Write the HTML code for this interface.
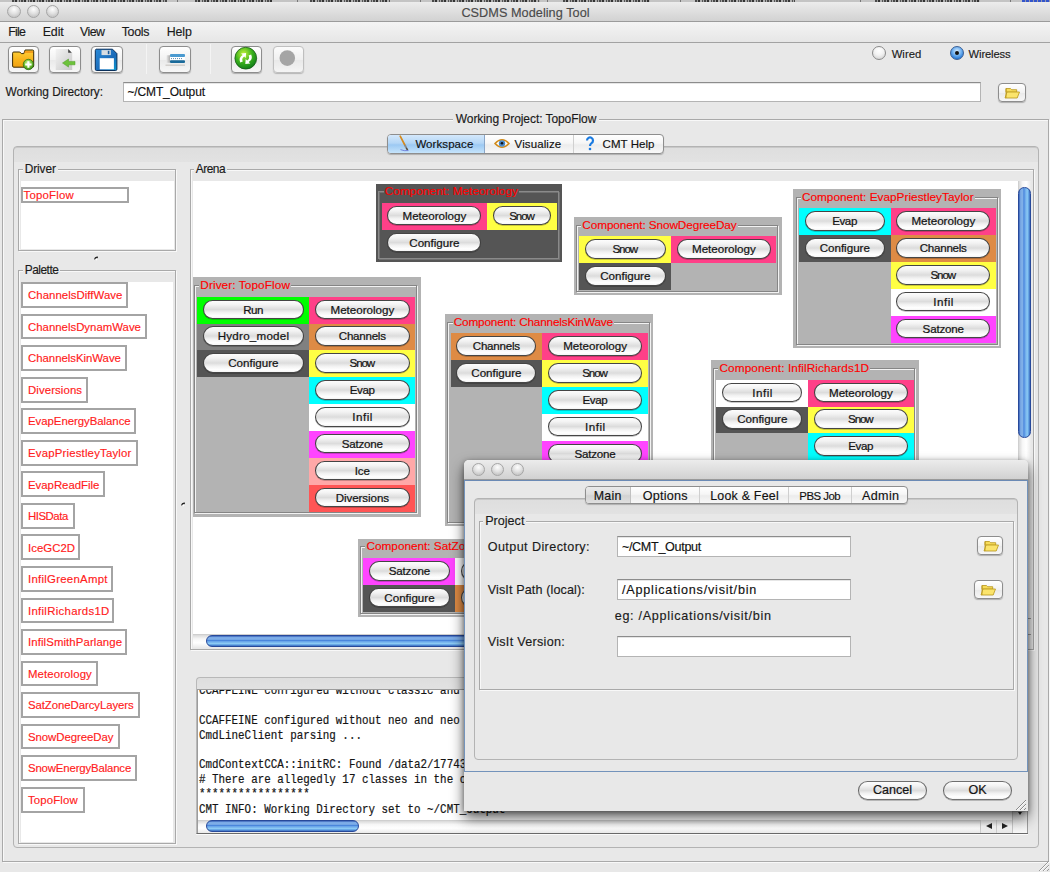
<!DOCTYPE html><html><head><meta charset="utf-8"><title>CSDMS Modeling Tool</title><style>
*{margin:0;padding:0;box-sizing:border-box}
html,body{width:1050px;height:872px;overflow:hidden;background:#e8e8e8;font-family:"Liberation Sans",sans-serif}
.a{position:absolute}
.t{white-space:pre;line-height:1;-webkit-text-stroke:.15px currentColor}
.btn{position:absolute;border-radius:10px;border:1px solid rgba(0,0,0,.72);box-shadow:0 .8px .6px rgba(0,0,0,.28);
 background:linear-gradient(#fdfdfd 0%,#f3f3f3 22%,#dcdcdc 50%,#f2f2f2 68%,#ffffff 88%,#f4f4f4 100%);
 font-size:11.6px;text-align:center;color:#141414;white-space:pre;overflow:hidden;-webkit-text-stroke:.22px #141414}
.tb{position:absolute;border:1px solid #a9a9a9;box-shadow:inset 1px 1px 0 #f8f8f8, 1px 1px 0 #f8f8f8}
.tbtn{position:absolute;border-radius:4px;border:1px solid #8d8d8d;background:linear-gradient(#ffffff,#f2f2f2 50%,#e9e9e9 51%,#f7f7f7);box-shadow:0 1px 1px rgba(0,0,0,.25)}
.tl{position:absolute;border-radius:50%;border:1px solid #a6a6a6;background:radial-gradient(circle at 50% 30%,#fdfdfd 0%,#e2e2e2 45%,#c9c9c9 75%,#d8d8d8 100%)}
.field{position:absolute;background:#fff;border:1px solid #b4b4b4;border-top-color:#8c8c8c;box-shadow:inset 0 1px 0 #e6e6e6}
</style></head><body>
<div class="a " style="left:0px;top:0px;width:1050px;height:2.2px;background:#c4c4c4"></div>
<div class="a " style="left:12px;top:0px;width:155px;height:1.6px;background:repeating-linear-gradient(90deg,#4a4a4a 0 2px,#9a9a9a 2px 3px,#333 3px 5px,#b0b0b0 5px 7px,#555 7px 8px,#a8a8a8 8px 9px)"></div>
<div class="a " style="left:195px;top:0px;width:77px;height:1.6px;background:repeating-linear-gradient(90deg,#4a4a4a 0 2px,#9a9a9a 2px 3px,#333 3px 5px,#b0b0b0 5px 7px,#555 7px 8px,#a8a8a8 8px 9px)"></div>
<div class="a " style="left:310px;top:0px;width:80px;height:1.6px;background:repeating-linear-gradient(90deg,#4a4a4a 0 2px,#9a9a9a 2px 3px,#333 3px 5px,#b0b0b0 5px 7px,#555 7px 8px,#a8a8a8 8px 9px)"></div>
<div class="a " style="left:432px;top:0px;width:108px;height:1.6px;background:repeating-linear-gradient(90deg,#4a4a4a 0 2px,#9a9a9a 2px 3px,#333 3px 5px,#b0b0b0 5px 7px,#555 7px 8px,#a8a8a8 8px 9px)"></div>
<div class="a " style="left:563px;top:0px;width:87px;height:1.6px;background:repeating-linear-gradient(90deg,#4a4a4a 0 2px,#9a9a9a 2px 3px,#333 3px 5px,#b0b0b0 5px 7px,#555 7px 8px,#a8a8a8 8px 9px)"></div>
<div class="a " style="left:695px;top:0px;width:100px;height:1.6px;background:repeating-linear-gradient(90deg,#4a4a4a 0 2px,#9a9a9a 2px 3px,#333 3px 5px,#b0b0b0 5px 7px,#555 7px 8px,#a8a8a8 8px 9px)"></div>
<div class="a " style="left:875px;top:0px;width:105px;height:1.6px;background:repeating-linear-gradient(90deg,#4a4a4a 0 2px,#9a9a9a 2px 3px,#333 3px 5px,#b0b0b0 5px 7px,#555 7px 8px,#a8a8a8 8px 9px)"></div>
<div class="a " style="left:177px;top:0px;width:1px;height:2.2px;background:#777"></div>
<div class="a " style="left:297px;top:0px;width:1px;height:2.2px;background:#777"></div>
<div class="a " style="left:420px;top:0px;width:1px;height:2.2px;background:#777"></div>
<div class="a " style="left:547px;top:0px;width:1px;height:2.2px;background:#777"></div>
<div class="a " style="left:680px;top:0px;width:1px;height:2.2px;background:#777"></div>
<div class="a " style="left:860px;top:0px;width:1px;height:2.2px;background:#777"></div>
<div class="a " style="left:1010px;top:0px;width:1px;height:2.2px;background:#777"></div>
<div class="a " style="left:1022px;top:0px;width:28px;height:1.6px;background:repeating-linear-gradient(90deg,#3355cc 0 3px,#99a 3px 4px)"></div>
<div class="a " style="left:0px;top:2px;width:1050px;height:20px;background:linear-gradient(#ececec,#dcdcdc 60%,#d2d2d2);border-bottom:1px solid #9b9b9b"></div>
<div class="a tl" style="left:7.4px;top:5.0px;width:13.2px;height:13.2px;"></div>
<div class="a tl" style="left:26.6px;top:5.0px;width:13.2px;height:13.2px;"></div>
<div class="a tl" style="left:45.8px;top:5.0px;width:13.2px;height:13.2px;"></div>
<div class="a t" style="left:225.5px;width:600px;text-align:center;top:7px;font-size:12.7px;color:#4a4a4a;letter-spacing:0.044px;">CSDMS Modeling Tool</div>
<div class="a " style="left:0px;top:22px;width:1050px;height:21px;background:linear-gradient(#f4f4f4,#e6e6e6);border-bottom:1px solid #a2a2a2"></div>
<div class="a t " style="left:8.3px;top:26px;font-size:12.4px;color:#1a1a1a;letter-spacing:-0.791px;">File</div>
<div class="a t " style="left:42.7px;top:26px;font-size:12.4px;color:#1a1a1a;letter-spacing:-0.103px;">Edit</div>
<div class="a t " style="left:80px;top:26px;font-size:12.4px;color:#1a1a1a;letter-spacing:-0.561px;">View</div>
<div class="a t " style="left:121.7px;top:26px;font-size:12.4px;color:#1a1a1a;letter-spacing:-0.282px;">Tools</div>
<div class="a t " style="left:166.7px;top:26px;font-size:12.4px;color:#1a1a1a;letter-spacing:-0.097px;">Help</div>
<div class="a tbtn" style="left:7.8px;top:45.8px;width:31.7px;height:27.0px;"><svg width="32" height="27" viewBox="0 0 32 27" style="position:absolute;left:-1px;top:-1px">
<defs><linearGradient id="fg" x1="0" y1="0" x2="0" y2="1"><stop offset="0" stop-color="#ffd23a"/><stop offset=".6" stop-color="#f7b21a"/><stop offset="1" stop-color="#f0a010"/></linearGradient>
<radialGradient id="pg" cx="45%" cy="35%" r="65%"><stop offset="0" stop-color="#d8f5b0"/><stop offset=".5" stop-color="#7cc83a"/><stop offset="1" stop-color="#3a8a18"/></radialGradient></defs>
<path d="M4.6 7.2 q0 -1.2 1.2 -1.2 h6 l1.5 1.6 h2.5 l1.3 -3.6 h7.4 q1.2 0 1.2 1.2 v14.8 q0 1.2 -1.2 1.2 h-18.7 q-1.2 0 -1.2 -1.2 z" fill="url(#fg)" stroke="#3a2a05" stroke-width="1"/>
<path d="M16.5 6 h8.5" stroke="#f08a10" stroke-width="1.4"/>
<circle cx="20.4" cy="18.5" r="5.2" fill="url(#pg)" stroke="#2a6a10" stroke-width=".7"/>
<path d="M20.4 15.3 v6.4 M17.2 18.5 h6.4" stroke="#fff" stroke-width="2.1"/>
</svg></div>
<div class="a tbtn" style="left:49px;top:45.8px;width:32px;height:27.0px;"><svg width="32" height="27" viewBox="0 0 32 27" style="position:absolute;left:-1px;top:-1px">
<defs><linearGradient id="ig" x1="0" y1="0" x2="1" y2="1"><stop offset="0" stop-color="#f4f4f4"/><stop offset="1" stop-color="#c8c8c8"/></linearGradient></defs>
<path d="M6.7 3 h12.5 l4 4 v17 h-16.5 z" fill="url(#ig)"/>
<path d="M19.2 3 l3.6 3.8 h-3.6 z" fill="#444"/>
<path d="M13.5 17 l6 -4 v2.4 h6.5 v3.4 h-6.5 v2.3 z" fill="#6cc23a" stroke="#4a9a20" stroke-width=".5"/>
</svg></div>
<div class="a tbtn" style="left:91px;top:45.8px;width:31.5px;height:27.0px;"><svg width="32" height="27" viewBox="0 0 32 27" style="position:absolute;left:-1px;top:-1px">
<defs><linearGradient id="sg" x1="0" y1="0" x2="1" y2="1"><stop offset="0" stop-color="#2a8ad8"/><stop offset=".6" stop-color="#1a6ab8"/><stop offset="1" stop-color="#0a9ad0"/></linearGradient></defs>
<path d="M5.5 3.2 h16 l4.4 4.4 v15.6 q0 1.3 -1.3 1.3 h-19 q-1.3 0 -1.3 -1.3 v-18.7 q0 -1.3 1.3 -1.3 z" fill="url(#sg)" stroke="#0a2f5a" stroke-width="1"/>
<rect x="10.5" y="4.1" width="9.3" height="5" fill="#d8dde2"/>
<rect x="16.8" y="4.8" width="1.6" height="3.4" fill="#1a5a9a"/>
<rect x="8.7" y="12.2" width="14.2" height="11.1" fill="#fff"/>
</svg></div>
<div class="a " style="left:146.2px;top:44px;width:1px;height:30px;background:#cfcfcf;border-right:1px solid #f4f4f4"></div>
<div class="a tbtn" style="left:159px;top:45.8px;width:32px;height:27.0px;"><svg width="32" height="27" viewBox="0 0 32 27" style="position:absolute;left:-1px;top:-1px">
<defs><linearGradient id="tg" x1="0" y1="0" x2="1" y2="0"><stop offset="0" stop-color="#f0f0f0"/><stop offset="1" stop-color="#a8a8a8"/></linearGradient></defs>
<path d="M7 16.8 l.6 -7.5 h3.6 v7.5 z" fill="url(#tg)"/>
<rect x="11" y="8" width="15" height="3" rx="1" fill="#4a9ad0"/>
<rect x="11" y="11" width="15" height="3.2" fill="#fff"/>
<path d="M12 12.6 h12" stroke="#5a8ab0" stroke-width="1" stroke-dasharray="1 1"/>
<rect x="11" y="14.2" width="15" height="2.9" rx="1" fill="#1a6a9a"/>
<rect x="6.5" y="18.5" width="19.5" height="1.4" fill="#c8c4c0" opacity=".8"/>
</svg></div>
<div class="a " style="left:209.5px;top:44px;width:1px;height:30px;background:#cfcfcf;border-right:1px solid #f4f4f4"></div>
<div class="a tbtn" style="left:231.4px;top:45.8px;width:30.900000000000006px;height:27.0px;"><svg width="31" height="27" viewBox="0 0 31 27" style="position:absolute;left:-1px;top:-1px">
<defs><radialGradient id="gg" cx="40%" cy="30%" r="70%"><stop offset="0" stop-color="#c6f23a"/><stop offset=".55" stop-color="#3cb31c"/><stop offset="1" stop-color="#12801a"/></radialGradient></defs>
<circle cx="14.8" cy="12.2" r="10.9" fill="url(#gg)" stroke="#1c5a18" stroke-width=".8"/>
<g transform="translate(-.8,-1)"><path d="M10 17.5 a6 6 0 0 1 2.5 -7.5 l-1.6 -1.4 l5 -.6 l-.4 5 l-1.4 -1.5 a3.8 3.8 0 0 0 -1.5 5 z" fill="#fff"/>
<path d="M21 9.5 a6 6 0 0 1 -2.5 7.5 l1.6 1.4 l-5 .6 l.4 -5 l1.4 1.5 a3.8 3.8 0 0 0 1.5 -5 z" fill="#fff"/></g>
</svg></div>
<div class="a tbtn" style="left:272.6px;top:45.8px;width:31.599999999999966px;height:27.0px;opacity:.85;border-color:#b9b9b9"><svg width="32" height="27" viewBox="0 0 32 27" style="position:absolute;left:-1px;top:-1px">
<circle cx="14.3" cy="12.1" r="7.8" fill="#9a9a9a"/>
</svg></div>
<div class="a " style="left:872.4px;top:46.3px;width:14px;height:14px;border-radius:50%;border:1px solid #8a8a8a;background:radial-gradient(circle at 50% 30%,#ffffff 0%,#f2f2f2 45%,#d8d8d8 80%,#eeeeee 100%)"></div>
<div class="a t " style="left:891.7px;top:49px;font-size:11.3px;color:#1a1a1a;letter-spacing:0.021px;">Wired</div>
<div class="a " style="left:949.5px;top:46.3px;width:14px;height:14px;border-radius:50%;border:1px solid #3a5f95;background:radial-gradient(circle at 50% 35%,#d6ecff 0%,#6fb0f0 45%,#2b7bd6 75%,#9ad0ff 100%)"><div class="a" style="left:4px;top:4px;width:4px;height:4px;border-radius:50%;background:#111"></div></div>
<div class="a t " style="left:968.6px;top:49px;font-size:11.2px;color:#1a1a1a;letter-spacing:-0.128px;">Wireless</div>
<div class="a t " style="left:5.6px;top:87px;font-size:11.9px;color:#1a1a1a;letter-spacing:-0.004px;">Working Directory:</div>
<div class="a field" style="left:123.3px;top:82.4px;width:857.7px;height:20.1px;"></div>
<div class="a t " style="left:127.4px;top:86px;font-size:12px;color:#111;letter-spacing:-0.127px;">~/CMT_Output</div>
<div class="a tbtn" style="left:997.5px;top:82.9px;width:28.09999999999991px;height:19.5px;"><svg width="28" height="20" viewBox="0 0 28 20" style="position:absolute;left:-1px;top:-1px">
<path d="M8 5.5 h4.5 l1.2 1.2 h5 v2.5 h-10.7 z" fill="#f7dc5a" stroke="#b8961a" stroke-width=".8"/>
<path d="M7 15 l2 -6 h12.5 l-2.3 6 z" fill="#fbe46c" stroke="#b8961a" stroke-width=".8"/>
<path d="M8 5.5 v9.5" stroke="#b8961a" stroke-width=".8"/>
</svg></div>
<div class="a tb" style="left:2.3px;top:118.9px;width:1046.9px;height:743.3000000000001px;"></div>
<div class="a " style="left:453px;top:114px;width:146px;height:12px;background:#e8e8e8"></div>
<div class="a t" style="left:226px;width:600px;text-align:center;top:113px;font-size:12px;color:#1a1a1a;letter-spacing:-0.072px;">Working Project: TopoFlow</div>
<div class="a " style="left:13.2px;top:145.7px;width:1025.3999999999999px;height:702.5px;border:1px solid #b3b3b3;border-radius:4px;background:linear-gradient(#dedede,#e2e2e2 15px,#e8e8e8 15px);box-shadow:inset 0 1px 0 #c8c8c8"></div>
<div class="a " style="left:387.1px;top:134.3px;width:276.69999999999993px;height:19.5px;border:1px solid #8e8e8e;border-radius:4px;background:linear-gradient(#ffffff,#f6f6f6 45%,#ececec 55%,#f8f8f8);box-shadow:0 1px 1px rgba(0,0,0,.22);overflow:hidden"><div class="a" style="left:0;top:0;width:97px;height:100%;background:linear-gradient(#d4e8fb,#b4d6f6 45%,#9cc9f3 55%,#c6e4fb);border-right:1px solid #8aa6c8"></div><div class="a" style="left:184.5px;top:0;width:1px;height:100%;background:#d0d0d0"></div></div>
<svg class="a" style="left:397px;top:135px" width="14" height="17" viewBox="0 0 14 17">
<path d="M3.2 1.2 L7.8 10" stroke="#d48a20" stroke-width="1.7" stroke-linecap="round"/>
<path d="M7.8 10 L9.2 12.6" stroke="#8a8a8a" stroke-width="2"/>
<path d="M9.2 12.6 L10.6 15.2" stroke="#5a4a3a" stroke-width="1.6"/>
<path d="M3.5 14.6 Q7 16.2 11.5 15.6" stroke="#6a7ad8" stroke-width=".9" fill="none"/>
</svg>
<div class="a t " style="left:415.4px;top:139px;font-size:11.5px;color:#111;letter-spacing:0.073px;">Workspace</div>
<svg class="a" style="left:494px;top:137px" width="16" height="13" viewBox="0 0 16 13">
<path d="M1 6.5 Q8 -1 15 6.5 Q8 14 1 6.5 z" fill="#fff" stroke="#d08a1a" stroke-width="1.6"/>
<circle cx="8" cy="6.5" r="3.2" fill="#4a8ac8"/><circle cx="8" cy="6.3" r="1.3" fill="#111"/>
</svg>
<div class="a t " style="left:514.6px;top:139px;font-size:11.5px;color:#111;letter-spacing:0.098px;">Visualize</div>
<svg class="a" style="left:585px;top:136px" width="10" height="16" viewBox="0 0 10 16">
<path d="M2 4.5 a3 3 0 1 1 4.5 2.6 q-1.5 1 -1.5 3" stroke="#1a7ae0" stroke-width="2.2" fill="none"/>
<circle cx="5" cy="13" r="1.3" fill="#1a7ae0"/>
</svg>
<div class="a t " style="left:602.6px;top:139px;font-size:11.5px;color:#111;letter-spacing:0.049px;">CMT Help</div>
<div class="a tb" style="left:17.7px;top:169.3px;width:157.9px;height:81.69999999999999px;"></div>
<div class="a t" style="left:22.7px;top:164px;font-size:11.9px;color:#1a1a1a;background:#e8e8e8;padding:0 2px;letter-spacing:-0.109px;">Driver</div>
<div class="a " style="left:20.6px;top:181px;width:153px;height:67.5px;background:#fff"></div>
<div class="a " style="left:21.3px;top:186.8px;width:107.3px;height:16.5px;border:2px solid #a4a4a4;background:#fff"></div>
<div class="a t " style="left:23.5px;top:190px;font-size:11.4px;color:#ff2020;letter-spacing:0.211px;">TopoFlow</div>
<svg class="a" style="left:93.4px;top:254.8px" width="6" height="6" viewBox="0 0 6 6"><path d="M1 4.2 Q1.6 1.2 4.8 1.6 Q5.2 2.8 4.6 3.2 Q3 2.6 1.8 4.6 z" fill="#1e1e1e"/><circle cx="3.6" cy="4.6" r=".8" fill="#fff"/></svg>
<svg class="a" style="left:179.8px;top:501.3px" width="6" height="6" viewBox="0 0 6 6"><path d="M1 4.2 Q1.6 1.2 4.8 1.6 Q5.2 2.8 4.6 3.2 Q3 2.6 1.8 4.6 z" fill="#1e1e1e"/><circle cx="3.6" cy="4.6" r=".8" fill="#fff"/></svg>
<div class="a tb" style="left:17.7px;top:270.4px;width:157.9px;height:573.2px;"></div>
<div class="a t" style="left:22.7px;top:265px;font-size:11.9px;color:#1a1a1a;background:#e8e8e8;padding:0 2px;letter-spacing:-0.468px;">Palette</div>
<div class="a " style="left:20.6px;top:281.6px;width:152.8px;height:560.8px;background:#fff"></div>
<div class="a " style="left:21.3px;top:282.1px;width:106.89999999999999px;height:25.8px;border:2px solid #a4a4a4;background:#fff"></div>
<div class="a t " style="left:28px;top:290px;font-size:11.4px;color:#ff2020;letter-spacing:0.042px;">ChannelsDiffWave</div>
<div class="a " style="left:21.3px;top:313.64000000000004px;width:125.50000000000001px;height:25.8px;border:2px solid #a4a4a4;background:#fff"></div>
<div class="a t " style="left:28px;top:322px;font-size:11.4px;color:#ff2020;letter-spacing:0.002px;">ChannelsDynamWave</div>
<div class="a " style="left:21.3px;top:345.18px;width:105.5px;height:25.8px;border:2px solid #a4a4a4;background:#fff"></div>
<div class="a t " style="left:28px;top:353px;font-size:11.4px;color:#ff2020;letter-spacing:-0.025px;">ChannelsKinWave</div>
<div class="a " style="left:21.3px;top:376.72px;width:67.2px;height:25.8px;border:2px solid #a4a4a4;background:#fff"></div>
<div class="a t " style="left:28px;top:385px;font-size:11.4px;color:#ff2020;letter-spacing:0.092px;">Diversions</div>
<div class="a " style="left:21.3px;top:408.26px;width:115.2px;height:25.8px;border:2px solid #a4a4a4;background:#fff"></div>
<div class="a t " style="left:28px;top:416px;font-size:11.4px;color:#ff2020;letter-spacing:-0.036px;">EvapEnergyBalance</div>
<div class="a " style="left:21.3px;top:439.8px;width:116.39999999999999px;height:25.8px;border:2px solid #a4a4a4;background:#fff"></div>
<div class="a t " style="left:28px;top:448px;font-size:11.4px;color:#ff2020;letter-spacing:0.182px;">EvapPriestleyTaylor</div>
<div class="a " style="left:21.3px;top:471.34000000000003px;width:83.9px;height:25.8px;border:2px solid #a4a4a4;background:#fff"></div>
<div class="a t " style="left:28px;top:480px;font-size:11.4px;color:#ff2020;letter-spacing:-0.019px;">EvapReadFile</div>
<div class="a " style="left:21.3px;top:502.88px;width:53.8px;height:25.8px;border:2px solid #a4a4a4;background:#fff"></div>
<div class="a t " style="left:28px;top:511px;font-size:11.4px;color:#ff2020;letter-spacing:-0.469px;">HISData</div>
<div class="a " style="left:21.3px;top:534.4200000000001px;width:58.7px;height:25.8px;border:2px solid #a4a4a4;background:#fff"></div>
<div class="a t " style="left:28px;top:543px;font-size:11.4px;color:#ff2020;letter-spacing:0.031px;">IceGC2D</div>
<div class="a " style="left:21.3px;top:565.96px;width:92.2px;height:25.8px;border:2px solid #a4a4a4;background:#fff"></div>
<div class="a t " style="left:28px;top:574px;font-size:11.4px;color:#ff2020;letter-spacing:0.269px;">InfilGreenAmpt</div>
<div class="a " style="left:21.3px;top:597.5px;width:93.0px;height:25.8px;border:2px solid #a4a4a4;background:#fff"></div>
<div class="a t " style="left:28px;top:606px;font-size:11.4px;color:#ff2020;letter-spacing:0.292px;">InfilRichards1D</div>
<div class="a " style="left:21.3px;top:629.04px;width:105.60000000000001px;height:25.8px;border:2px solid #a4a4a4;background:#fff"></div>
<div class="a t " style="left:28px;top:637px;font-size:11.4px;color:#ff2020;letter-spacing:0.094px;">InfilSmithParlange</div>
<div class="a " style="left:21.3px;top:660.58px;width:77.0px;height:25.8px;border:2px solid #a4a4a4;background:#fff"></div>
<div class="a t " style="left:28px;top:669px;font-size:11.4px;color:#ff2020;letter-spacing:0.111px;">Meteorology</div>
<div class="a " style="left:21.3px;top:692.12px;width:118.89999999999999px;height:25.8px;border:2px solid #a4a4a4;background:#fff"></div>
<div class="a t " style="left:28px;top:700px;font-size:11.4px;color:#ff2020;letter-spacing:-0.076px;">SatZoneDarcyLayers</div>
<div class="a " style="left:21.3px;top:723.6600000000001px;width:98.7px;height:25.8px;border:2px solid #a4a4a4;background:#fff"></div>
<div class="a t " style="left:28px;top:732px;font-size:11.4px;color:#ff2020;letter-spacing:-0.051px;">SnowDegreeDay</div>
<div class="a " style="left:21.3px;top:755.2px;width:115.8px;height:25.8px;border:2px solid #a4a4a4;background:#fff"></div>
<div class="a t " style="left:28px;top:763px;font-size:11.4px;color:#ff2020;letter-spacing:-0.157px;">SnowEnergyBalance</div>
<div class="a " style="left:21.3px;top:786.74px;width:63.3px;height:25.8px;border:2px solid #a4a4a4;background:#fff"></div>
<div class="a t " style="left:28px;top:795px;font-size:11.4px;color:#ff2020;letter-spacing:0.125px;">TopoFlow</div>
<div class="a tb" style="left:189.6px;top:169.3px;width:843.9999999999999px;height:480.99999999999994px;"></div>
<div class="a t" style="left:193.7px;top:164px;font-size:11.9px;color:#1a1a1a;background:#e8e8e8;padding:0 2px;letter-spacing:-0.454px;">Arena</div>
<div class="a" style="left:192.8px;top:181px;width:825.2px;height:453.29999999999995px;background:#fff;overflow:hidden">
<div class="a" style="left:-1.0px;top:96.3px;width:228.8px;height:239.3px;background:#b3b3b3"><div class="a" style="left:2.2px;top:7.7px;width:223.10000000000002px;height:228.5px;border:1px solid #858585;box-shadow:inset 1px 1px 0 #f2f2f2,1px 1px 0 #f2f2f2"></div><div class="a t" style="left:7.5px;top:2.70px;font-size:11.8px;color:#ff0000;background:#b3b3b3;padding:0 1px;letter-spacing:0.088px;">Driver: TopoFlow</div><div class="a" style="left:5.5px;top:19.4px;width:112.2px;height:26.900000000000002px;background:#00ff00"></div><div class="btn" style="left:11.2px;top:22.299999999999997px;width:100.8px;height:19.6px;line-height:17.4px;letter-spacing:-0.610px;text-indent:-0.610px">Run</div><div class="a" style="left:5.5px;top:46.25px;width:112.2px;height:26.900000000000002px;background:#808080"></div><div class="btn" style="left:11.2px;top:49.15px;width:100.8px;height:19.6px;line-height:17.4px;letter-spacing:0.232px;text-indent:0.232px">Hydro_model</div><div class="a" style="left:5.5px;top:73.1px;width:112.2px;height:26.900000000000002px;background:#555555"></div><div class="btn" style="left:11.2px;top:76.0px;width:100.8px;height:19.6px;line-height:17.4px;letter-spacing:-0.003px;text-indent:-0.003px">Configure</div><div class="a" style="left:117.7px;top:19.4px;width:105.8px;height:26.900000000000002px;background:#ff4088"></div><div class="btn" style="left:123.4px;top:22.299999999999997px;width:94.39999999999999px;height:19.6px;line-height:17.4px;letter-spacing:-0.000px;text-indent:-0.000px">Meteorology</div><div class="a" style="left:117.7px;top:46.25px;width:105.8px;height:26.900000000000002px;background:#de8b45"></div><div class="btn" style="left:123.4px;top:49.15px;width:94.39999999999999px;height:19.6px;line-height:17.4px;letter-spacing:-0.255px;text-indent:-0.255px">Channels</div><div class="a" style="left:117.7px;top:73.1px;width:105.8px;height:26.900000000000002px;background:#ffff44"></div><div class="btn" style="left:123.4px;top:76.0px;width:94.39999999999999px;height:19.6px;line-height:17.4px;letter-spacing:-1.110px;text-indent:-1.110px">Snow</div><div class="a" style="left:117.7px;top:99.95000000000002px;width:105.8px;height:26.900000000000002px;background:#00ffff"></div><div class="btn" style="left:123.4px;top:102.85000000000002px;width:94.39999999999999px;height:19.6px;line-height:17.4px;letter-spacing:-0.426px;text-indent:-0.426px">Evap</div><div class="a" style="left:117.7px;top:126.80000000000001px;width:105.8px;height:26.900000000000002px;background:#ffffff"></div><div class="btn" style="left:123.4px;top:129.70000000000002px;width:94.39999999999999px;height:19.6px;line-height:17.4px;letter-spacing:0.509px;text-indent:0.509px">Infil</div><div class="a" style="left:117.7px;top:153.65px;width:105.8px;height:26.900000000000002px;background:#ff44ff"></div><div class="btn" style="left:123.4px;top:156.55px;width:94.39999999999999px;height:19.6px;line-height:17.4px;letter-spacing:-0.199px;text-indent:-0.199px">Satzone</div><div class="a" style="left:117.7px;top:180.50000000000003px;width:105.8px;height:26.900000000000002px;background:#ffa8a8"></div><div class="btn" style="left:123.4px;top:183.40000000000003px;width:94.39999999999999px;height:19.6px;line-height:17.4px;letter-spacing:-0.209px;text-indent:-0.209px">Ice</div><div class="a" style="left:117.7px;top:207.35000000000002px;width:105.8px;height:26.900000000000002px;background:#ff5555"></div><div class="btn" style="left:123.4px;top:210.25000000000003px;width:94.39999999999999px;height:19.6px;line-height:17.4px;letter-spacing:-0.080px;text-indent:-0.080px">Diversions</div></div>
<div class="a" style="left:183.5px;top:2.6px;width:186.0px;height:78.19999999999999px;background:#555555"><div class="a" style="left:2.2px;top:7.7px;width:180.3px;height:67.39999999999999px;border:1px solid #8a8a8a;box-shadow:inset 1px 1px 0 #707070,1px 1px 0 #707070"></div><div class="a t" style="left:7.5px;top:2.40px;font-size:11.8px;color:#ff0000;background:#555555;padding:0 1px;letter-spacing:0.030px;">Component: Meteorology</div><div class="a" style="left:5.5px;top:19.4px;width:105.3px;height:26.900000000000002px;background:#ff4088"></div><div class="btn" style="left:11.2px;top:22.299999999999997px;width:93.89999999999999px;height:19.6px;line-height:17.4px;letter-spacing:-0.000px;text-indent:-0.000px">Meteorology</div><div class="a" style="left:5.5px;top:46.25px;width:105.3px;height:26.900000000000002px;background:#555555"></div><div class="btn" style="left:11.2px;top:49.15px;width:93.89999999999999px;height:19.6px;line-height:17.4px;letter-spacing:-0.003px;text-indent:-0.003px">Configure</div><div class="a" style="left:110.8px;top:19.4px;width:69.9px;height:26.900000000000002px;background:#ffff44"></div><div class="btn" style="left:116.5px;top:22.299999999999997px;width:58.50000000000001px;height:19.6px;line-height:17.4px;letter-spacing:-1.110px;text-indent:-1.110px">Snow</div></div>
<div class="a" style="left:381.0px;top:36px;width:208.0px;height:78.19999999999999px;background:#b3b3b3"><div class="a" style="left:2.2px;top:7.7px;width:202.3px;height:67.39999999999999px;border:1px solid #858585;box-shadow:inset 1px 1px 0 #f2f2f2,1px 1px 0 #f2f2f2"></div><div class="a t" style="left:7.5px;top:3.00px;font-size:11.8px;color:#ff0000;background:#b3b3b3;padding:0 1px;letter-spacing:-0.101px;">Component: SnowDegreeDay</div><div class="a" style="left:5.5px;top:19.4px;width:92px;height:26.900000000000002px;background:#ffff44"></div><div class="btn" style="left:11.2px;top:22.299999999999997px;width:80.6px;height:19.6px;line-height:17.4px;letter-spacing:-1.110px;text-indent:-1.110px">Snow</div><div class="a" style="left:5.5px;top:46.25px;width:92px;height:26.900000000000002px;background:#555555"></div><div class="btn" style="left:11.2px;top:49.15px;width:80.6px;height:19.6px;line-height:17.4px;letter-spacing:-0.003px;text-indent:-0.003px">Configure</div><div class="a" style="left:97.5px;top:19.4px;width:105.2px;height:26.900000000000002px;background:#ff4088"></div><div class="btn" style="left:103.2px;top:22.299999999999997px;width:93.8px;height:19.6px;line-height:17.4px;letter-spacing:-0.000px;text-indent:-0.000px">Meteorology</div></div>
<div class="a" style="left:600.6px;top:8px;width:207.8px;height:158.75px;background:#b3b3b3"><div class="a" style="left:2.2px;top:7.7px;width:202.10000000000002px;height:147.95px;border:1px solid #858585;box-shadow:inset 1px 1px 0 #f2f2f2,1px 1px 0 #f2f2f2"></div><div class="a t" style="left:7.5px;top:3.00px;font-size:11.8px;color:#ff0000;background:#b3b3b3;padding:0 1px;letter-spacing:0.020px;">Component: EvapPriestleyTaylor</div><div class="a" style="left:5.5px;top:19.4px;width:91.8px;height:26.900000000000002px;background:#00ffff"></div><div class="btn" style="left:11.2px;top:22.299999999999997px;width:80.39999999999999px;height:19.6px;line-height:17.4px;letter-spacing:-0.426px;text-indent:-0.426px">Evap</div><div class="a" style="left:5.5px;top:46.25px;width:91.8px;height:26.900000000000002px;background:#555555"></div><div class="btn" style="left:11.2px;top:49.15px;width:80.39999999999999px;height:19.6px;line-height:17.4px;letter-spacing:-0.003px;text-indent:-0.003px">Configure</div><div class="a" style="left:97.3px;top:19.4px;width:105.2px;height:26.900000000000002px;background:#ff4088"></div><div class="btn" style="left:103.0px;top:22.299999999999997px;width:93.8px;height:19.6px;line-height:17.4px;letter-spacing:-0.000px;text-indent:-0.000px">Meteorology</div><div class="a" style="left:97.3px;top:46.25px;width:105.2px;height:26.900000000000002px;background:#de8b45"></div><div class="btn" style="left:103.0px;top:49.15px;width:93.8px;height:19.6px;line-height:17.4px;letter-spacing:-0.255px;text-indent:-0.255px">Channels</div><div class="a" style="left:97.3px;top:73.1px;width:105.2px;height:26.900000000000002px;background:#ffff44"></div><div class="btn" style="left:103.0px;top:76.0px;width:93.8px;height:19.6px;line-height:17.4px;letter-spacing:-1.110px;text-indent:-1.110px">Snow</div><div class="a" style="left:97.3px;top:99.95000000000002px;width:105.2px;height:26.900000000000002px;background:#ffffff"></div><div class="btn" style="left:103.0px;top:102.85000000000002px;width:93.8px;height:19.6px;line-height:17.4px;letter-spacing:0.509px;text-indent:0.509px">Infil</div><div class="a" style="left:97.3px;top:126.80000000000001px;width:105.2px;height:26.900000000000002px;background:#ff44ff"></div><div class="btn" style="left:103.0px;top:129.70000000000002px;width:93.8px;height:19.6px;line-height:17.4px;letter-spacing:-0.199px;text-indent:-0.199px">Satzone</div></div>
<div class="a" style="left:252.4px;top:133px;width:208.10000000000002px;height:212.45000000000002px;background:#b3b3b3"><div class="a" style="left:2.2px;top:7.7px;width:202.40000000000003px;height:201.65px;border:1px solid #858585;box-shadow:inset 1px 1px 0 #f2f2f2,1px 1px 0 #f2f2f2"></div><div class="a t" style="left:7.5px;top:3.00px;font-size:11.8px;color:#ff0000;background:#b3b3b3;padding:0 1px;letter-spacing:-0.188px;">Component: ChannelsKinWave</div><div class="a" style="left:5.5px;top:19.4px;width:91.5px;height:26.900000000000002px;background:#de8b45"></div><div class="btn" style="left:11.2px;top:22.299999999999997px;width:80.1px;height:19.6px;line-height:17.4px;letter-spacing:-0.255px;text-indent:-0.255px">Channels</div><div class="a" style="left:5.5px;top:46.25px;width:91.5px;height:26.900000000000002px;background:#555555"></div><div class="btn" style="left:11.2px;top:49.15px;width:80.1px;height:19.6px;line-height:17.4px;letter-spacing:-0.003px;text-indent:-0.003px">Configure</div><div class="a" style="left:97.0px;top:19.4px;width:105.8px;height:26.900000000000002px;background:#ff4088"></div><div class="btn" style="left:102.7px;top:22.299999999999997px;width:94.39999999999999px;height:19.6px;line-height:17.4px;letter-spacing:-0.000px;text-indent:-0.000px">Meteorology</div><div class="a" style="left:97.0px;top:46.25px;width:105.8px;height:26.900000000000002px;background:#ffff44"></div><div class="btn" style="left:102.7px;top:49.15px;width:94.39999999999999px;height:19.6px;line-height:17.4px;letter-spacing:-1.110px;text-indent:-1.110px">Snow</div><div class="a" style="left:97.0px;top:73.1px;width:105.8px;height:26.900000000000002px;background:#00ffff"></div><div class="btn" style="left:102.7px;top:76.0px;width:94.39999999999999px;height:19.6px;line-height:17.4px;letter-spacing:-0.426px;text-indent:-0.426px">Evap</div><div class="a" style="left:97.0px;top:99.95000000000002px;width:105.8px;height:26.900000000000002px;background:#ffffff"></div><div class="btn" style="left:102.7px;top:102.85000000000002px;width:94.39999999999999px;height:19.6px;line-height:17.4px;letter-spacing:0.509px;text-indent:0.509px">Infil</div><div class="a" style="left:97.0px;top:126.80000000000001px;width:105.8px;height:26.900000000000002px;background:#ff44ff"></div><div class="btn" style="left:102.7px;top:129.70000000000002px;width:94.39999999999999px;height:19.6px;line-height:17.4px;letter-spacing:-0.199px;text-indent:-0.199px">Satzone</div><div class="a" style="left:97.0px;top:153.65px;width:105.8px;height:26.900000000000002px;background:#ffa8a8"></div><div class="btn" style="left:102.7px;top:156.55px;width:94.39999999999999px;height:19.6px;line-height:17.4px;letter-spacing:-0.209px;text-indent:-0.209px">Ice</div><div class="a" style="left:97.0px;top:180.50000000000003px;width:105.8px;height:26.900000000000002px;background:#ff5555"></div><div class="btn" style="left:102.7px;top:183.40000000000003px;width:94.39999999999999px;height:19.6px;line-height:17.4px;letter-spacing:-0.080px;text-indent:-0.080px">Diversions</div></div>
<div class="a" style="left:518.2px;top:179.3px;width:208.0px;height:158.75px;background:#b3b3b3"><div class="a" style="left:2.2px;top:7.7px;width:202.3px;height:147.95px;border:1px solid #858585;box-shadow:inset 1px 1px 0 #f2f2f2,1px 1px 0 #f2f2f2"></div><div class="a t" style="left:7.5px;top:2.70px;font-size:11.8px;color:#ff0000;background:#b3b3b3;padding:0 1px;letter-spacing:0.084px;">Component: InfilRichards1D</div><div class="a" style="left:5.5px;top:19.4px;width:91.6px;height:26.900000000000002px;background:#ffffff"></div><div class="btn" style="left:11.2px;top:22.299999999999997px;width:80.19999999999999px;height:19.6px;line-height:17.4px;letter-spacing:0.509px;text-indent:0.509px">Infil</div><div class="a" style="left:5.5px;top:46.25px;width:91.6px;height:26.900000000000002px;background:#555555"></div><div class="btn" style="left:11.2px;top:49.15px;width:80.19999999999999px;height:19.6px;line-height:17.4px;letter-spacing:-0.003px;text-indent:-0.003px">Configure</div><div class="a" style="left:97.1px;top:19.4px;width:105.6px;height:26.900000000000002px;background:#ff4088"></div><div class="btn" style="left:102.8px;top:22.299999999999997px;width:94.19999999999999px;height:19.6px;line-height:17.4px;letter-spacing:-0.000px;text-indent:-0.000px">Meteorology</div><div class="a" style="left:97.1px;top:46.25px;width:105.6px;height:26.900000000000002px;background:#ffff44"></div><div class="btn" style="left:102.8px;top:49.15px;width:94.19999999999999px;height:19.6px;line-height:17.4px;letter-spacing:-1.110px;text-indent:-1.110px">Snow</div><div class="a" style="left:97.1px;top:73.1px;width:105.6px;height:26.900000000000002px;background:#00ffff"></div><div class="btn" style="left:102.8px;top:76.0px;width:94.19999999999999px;height:19.6px;line-height:17.4px;letter-spacing:-0.426px;text-indent:-0.426px">Evap</div><div class="a" style="left:97.1px;top:99.95000000000002px;width:105.6px;height:26.900000000000002px;background:#de8b45"></div><div class="btn" style="left:102.8px;top:102.85000000000002px;width:94.19999999999999px;height:19.6px;line-height:17.4px;letter-spacing:-0.255px;text-indent:-0.255px">Channels</div><div class="a" style="left:97.1px;top:126.80000000000001px;width:105.6px;height:26.900000000000002px;background:#ff44ff"></div><div class="btn" style="left:102.8px;top:129.70000000000002px;width:94.19999999999999px;height:19.6px;line-height:17.4px;letter-spacing:-0.199px;text-indent:-0.199px">Satzone</div></div>
<div class="a" style="left:165.2px;top:357.7px;width:208.20000000000002px;height:78.19999999999999px;background:#b3b3b3"><div class="a" style="left:2.2px;top:7.7px;width:202.50000000000003px;height:67.39999999999999px;border:1px solid #858585;box-shadow:inset 1px 1px 0 #f2f2f2,1px 1px 0 #f2f2f2"></div><div class="a t" style="left:7.5px;top:2.30px;font-size:11.8px;color:#ff0000;background:#b3b3b3;padding:0 1px;letter-spacing:-0.016px;">Component: SatZoneDarcyLayers</div><div class="a" style="left:5.5px;top:19.4px;width:92px;height:26.900000000000002px;background:#ff44ff"></div><div class="btn" style="left:11.2px;top:22.299999999999997px;width:80.6px;height:19.6px;line-height:17.4px;letter-spacing:-0.199px;text-indent:-0.199px">Satzone</div><div class="a" style="left:5.5px;top:46.25px;width:92px;height:26.900000000000002px;background:#555555"></div><div class="btn" style="left:11.2px;top:49.15px;width:80.6px;height:19.6px;line-height:17.4px;letter-spacing:-0.003px;text-indent:-0.003px">Configure</div><div class="a" style="left:97.5px;top:19.4px;width:105.4px;height:26.900000000000002px;background:#ffffff"></div><div class="btn" style="left:103.2px;top:22.299999999999997px;width:94.0px;height:19.6px;line-height:17.4px;letter-spacing:0.509px;text-indent:0.509px">Infil</div><div class="a" style="left:97.5px;top:46.25px;width:105.4px;height:26.900000000000002px;background:#de8b45"></div><div class="btn" style="left:103.2px;top:49.15px;width:94.0px;height:19.6px;line-height:17.4px;letter-spacing:-0.255px;text-indent:-0.255px">Channels</div></div>
</div>
<div class="a " style="left:1018px;top:181px;width:13.4px;height:453.3px;background:linear-gradient(90deg,#d9d9d9,#f7f7f7 30%,#ffffff 60%,#e9e9e9);border-left:1px solid #cfcfcf"></div>
<div class="a " style="left:1018.4px;top:187px;width:12.6px;height:251px;border-radius:6.3px;background:linear-gradient(90deg,#3a62b8 0%,#7aaae6 15%,#80b0e8 32%,#4a86dc 45%,#6aa6ea 55%,#8ccaf4 75%,#5a9ae0 90%,#3a66b8 100%);border:1px solid #27499a"></div>
<div class="a " style="left:1018px;top:618px;width:13.4px;height:1px;background:#9a9a9a"></div>
<div class="a " style="left:1018px;top:634px;width:13.4px;height:1px;background:#9a9a9a"></div>
<div class="a " style="left:192.8px;top:634.3px;width:825.2px;height:13.4px;background:linear-gradient(#d9d9d9,#f7f7f7 30%,#ffffff 60%,#e9e9e9);border-top:1px solid #cfcfcf"></div>
<div class="a " style="left:205.8px;top:634.6px;width:820px;height:12.6px;border-radius:6.3px;background:linear-gradient(#3a62b8 0%,#7aaae6 15%,#80b0e8 32%,#4a86dc 45%,#6aa6ea 55%,#8ccaf4 75%,#5a9ae0 90%,#3a66b8 100%);border:1px solid #27499a"></div>
<div class="a " style="left:195.8px;top:676.8px;width:832.5px;height:157.4000000000001px;border:1px solid #b8b8b8;border-bottom-color:#6a6a6a;border-right-color:#7a7a7a;box-shadow:0 1px 0 #fafafa;border-radius:4px 4px 0 0;background:linear-gradient(#dedede,#e2e2e2 12px,#e8e8e8 12.5px)"></div>
<div class="a " style="left:197.2px;top:689.4px;width:830.5px;height:143.8px;background:#fff;border:1px solid #9c9c9c;border-bottom:none;overflow:hidden"><div class="a" style="left:1.2px;top:-5.40px;font-size:12.2px;font-family:'Liberation Mono', monospace;color:#141414;white-space:pre;line-height:1;-webkit-text-stroke:.2px #141414;transform:scaleX(0.891);transform-origin:0 0">CCAFFEINE configured without classic and neo</div><div class="a" style="left:1.2px;top:24.60px;font-size:12.2px;font-family:'Liberation Mono', monospace;color:#141414;white-space:pre;line-height:1;-webkit-text-stroke:.2px #141414;transform:scaleX(0.891);transform-origin:0 0">CCAFFEINE configured without neo and neo</div><div class="a" style="left:1.2px;top:39.60px;font-size:12.2px;font-family:'Liberation Mono', monospace;color:#141414;white-space:pre;line-height:1;-webkit-text-stroke:.2px #141414;transform:scaleX(0.891);transform-origin:0 0">CmdLineClient parsing ...</div><div class="a" style="left:1.2px;top:68.60px;font-size:12.2px;font-family:'Liberation Mono', monospace;color:#141414;white-space:pre;line-height:1;-webkit-text-stroke:.2px #141414;transform:scaleX(0.891);transform-origin:0 0">CmdContextCCA::initRC: Found /data2/17743</div><div class="a" style="left:1.2px;top:83.60px;font-size:12.2px;font-family:'Liberation Mono', monospace;color:#141414;white-space:pre;line-height:1;-webkit-text-stroke:.2px #141414;transform:scaleX(0.891);transform-origin:0 0"># There are allegedly 17 classes in the c</div><div class="a" style="left:1.2px;top:97.60px;font-size:12.2px;font-family:'Liberation Mono', monospace;color:#141414;white-space:pre;line-height:1;-webkit-text-stroke:.2px #141414;transform:scaleX(0.891);transform-origin:0 0">*****************</div><div class="a" style="left:1.2px;top:113.60px;font-size:12.2px;font-family:'Liberation Mono', monospace;color:#141414;white-space:pre;line-height:1;-webkit-text-stroke:.2px #141414;transform:scaleX(0.891);transform-origin:0 0">CMT INFO: Working Directory set to ~/CMT_Output</div></div>
<div class="a " style="left:198px;top:819.5px;width:781.7px;height:13.5px;background:linear-gradient(#d9d9d9,#f7f7f7 30%,#ffffff 60%,#e9e9e9);border-top:1px solid #cfcfcf"></div>
<div class="a " style="left:206px;top:820px;width:153.3px;height:12.4px;border-radius:6.2px;background:linear-gradient(#3a62b8 0%,#7aaae6 15%,#80b0e8 32%,#4a86dc 45%,#6aa6ea 55%,#8ccaf4 75%,#5a9ae0 90%,#3a66b8 100%);border:1px solid #27499a"></div>
<div class="a " style="left:979.7px;top:819.5px;width:32px;height:13.5px;background:linear-gradient(#e4e4e4,#fafafa 50%,#e8e8e8);border-left:1px solid #cfcfcf"><div class="a" style="left:5px;top:3.5px;width:0;height:0;border-right:6px solid #222;border-top:3.5px solid transparent;border-bottom:3.5px solid transparent"></div><div class="a" style="left:15.5px;top:0;width:1px;height:100%;background:#d0d0d0"></div><div class="a" style="left:21px;top:3.5px;width:0;height:0;border-left:6px solid #222;border-top:3.5px solid transparent;border-bottom:3.5px solid transparent"></div></div>
<div class="a " style="left:1011.7px;top:811px;width:15.6px;height:22.2px;background:linear-gradient(#e6e6e6,#f8f8f8);border-left:1px solid #c8c8c8;border-top:1px solid #d0d0d0"><div class="a" style="left:5px;top:0;width:0;height:0;border-top:3px solid #222;border-left:2.5px solid transparent;border-right:2.5px solid transparent"></div></div>
<svg class="a" style="left:1036px;top:858px" width="14" height="14" viewBox="0 0 14 14">
<path d="M13 3 L3 13 M13 7 L7 13 M13 11 L11 13" stroke="#9a9a9a" stroke-width="1"/>
<path d="M13 4 L4 13 M13 8 L8 13" stroke="#fff" stroke-width=".8"/>
</svg>
<div class="a " style="left:464.1px;top:459.9px;width:563.8000000000001px;height:350.9px;border-radius:5px 5px 0 0;box-shadow:0 7px 14px rgba(0,0,0,.62),0 1px 5px rgba(0,0,0,.35)"></div>
<div class="a " style="left:464.1px;top:459.9px;width:563.8000000000001px;height:350.9px;border-radius:5px 5px 0 0;background:#e8e8e8;overflow:hidden"><div class="a" style="left:0;top:0;width:100%;height:20.4px;background:linear-gradient(#ececec,#dcdcdc 60%,#d1d1d1);border-bottom:1px solid #9a9a9a"></div></div>
<div class="a tl" style="left:471.7px;top:463.1px;width:13px;height:13px;"></div>
<div class="a tl" style="left:491.2px;top:463.1px;width:13px;height:13px;"></div>
<div class="a tl" style="left:510.70000000000005px;top:463.1px;width:13px;height:13px;"></div>
<div class="a " style="left:464.1px;top:480.3px;width:563.5000000000001px;height:291.7px;border:1px solid #7393bb;border-top:1px solid #6b8ab5;background:#e8e8e8"></div>
<div class="a " style="left:474.2px;top:498px;width:543.4000000000001px;height:262px;border:1px solid #b3b3b3;border-radius:4px;background:linear-gradient(#dedede,#e2e2e2 15px,#e8e8e8 15px);box-shadow:inset 0 1px 0 #c8c8c8"></div>
<div class="a " style="left:584.5px;top:486.2px;width:323.0px;height:18.19999999999999px;border:1px solid #8e8e8e;border-radius:4px;background:linear-gradient(#ffffff,#f6f6f6 45%,#ececec 55%,#f8f8f8);box-shadow:0 1px 1px rgba(0,0,0,.22);overflow:hidden"><div class="a" style="left:0;top:0;width:45px;height:100%;background:linear-gradient(#eaeaea,#dedede 45%,#d2d2d2 55%,#e0e0e0);border-right:1px solid #c0c0c0"></div><div class="a" style="left:113.29999999999995px;top:0;width:1px;height:100%;background:#cfcfcf"></div><div class="a" style="left:202.0px;top:0;width:1px;height:100%;background:#cfcfcf"></div><div class="a" style="left:265.1px;top:0;width:1px;height:100%;background:#cfcfcf"></div></div>
<div class="a t " style="left:593.8px;top:490px;font-size:12.4px;color:#111;letter-spacing:0.245px;">Main</div>
<div class="a t " style="left:642.8px;top:490px;font-size:12.6px;color:#111;letter-spacing:0.216px;">Options</div>
<div class="a t " style="left:710.2px;top:490px;font-size:12.4px;color:#111;letter-spacing:0.233px;">Look &amp; Feel</div>
<div class="a t " style="left:799.3px;top:491px;font-size:11.4px;color:#111;letter-spacing:-0.498px;">PBS Job</div>
<div class="a t " style="left:862px;top:490px;font-size:12.6px;color:#111;letter-spacing:0.327px;">Admin</div>
<div class="a tb" style="left:478.6px;top:520.6px;width:535.1px;height:169.69999999999993px;"></div>
<div class="a t" style="left:483.2px;top:515px;font-size:12.6px;color:#1a1a1a;background:#e8e8e8;padding:0 2px;letter-spacing:0.001px;">Project</div>
<div class="a t " style="left:487.7px;top:541px;font-size:12.6px;color:#1a1a1a;letter-spacing:0.413px;">Output Directory:</div>
<div class="a field" style="left:617.2px;top:535.8px;width:233.5px;height:20.8px;"></div>
<div class="a t " style="left:621.9px;top:541px;font-size:12.6px;color:#111;letter-spacing:-0.325px;">~/CMT_Output</div>
<div class="a tbtn" style="left:976.6px;top:536.4px;width:26.399999999999977px;height:18.899999999999977px;"><svg width="28" height="20" viewBox="0 0 28 20" style="position:absolute;left:-1px;top:-1px">
<path d="M8 5.5 h4.5 l1.2 1.2 h5 v2.5 h-10.7 z" fill="#f7dc5a" stroke="#b8961a" stroke-width=".8"/>
<path d="M7 15 l2 -6 h12.5 l-2.3 6 z" fill="#fbe46c" stroke="#b8961a" stroke-width=".8"/>
<path d="M8 5.5 v9.5" stroke="#b8961a" stroke-width=".8"/>
</svg></div>
<div class="a t " style="left:487.7px;top:584px;font-size:12.6px;color:#1a1a1a;letter-spacing:0.119px;">VisIt Path (local):</div>
<div class="a field" style="left:617.2px;top:579px;width:233.5px;height:20.6px;"></div>
<div class="a t " style="left:622px;top:584px;font-size:12.6px;color:#111;letter-spacing:0.791px;">/Applications/visit/bin</div>
<div class="a tbtn" style="left:973.5px;top:579.8px;width:29.5px;height:18.800000000000068px;"><svg width="28" height="20" viewBox="0 0 28 20" style="position:absolute;left:-1px;top:-1px">
<path d="M8 5.5 h4.5 l1.2 1.2 h5 v2.5 h-10.7 z" fill="#f7dc5a" stroke="#b8961a" stroke-width=".8"/>
<path d="M7 15 l2 -6 h12.5 l-2.3 6 z" fill="#fbe46c" stroke="#b8961a" stroke-width=".8"/>
<path d="M8 5.5 v9.5" stroke="#b8961a" stroke-width=".8"/>
</svg></div>
<div class="a t " style="left:614.7px;top:610px;font-size:12.6px;color:#1a1a1a;letter-spacing:0.708px;">eg: /Applications/visit/bin</div>
<div class="a t " style="left:487.7px;top:636px;font-size:12.6px;color:#1a1a1a;letter-spacing:0.295px;">VisIt Version:</div>
<div class="a field" style="left:617.2px;top:636.3px;width:233.5px;height:20.4px;"></div>
<div class="btn" style="left:858px;top:781.4px;width:69px;height:19.0px;line-height:17.0px;font-size:12.5px;border-color:rgba(0,0,0,.55)">Cancel</div>
<div class="btn" style="left:943px;top:781.4px;width:69px;height:19.0px;line-height:17.0px;font-size:12.5px;border-color:rgba(0,0,0,.55)">OK</div>
<svg class="a" style="left:1012px;top:796px" width="15" height="15" viewBox="0 0 15 15">
<path d="M14 4 L4 14 M14 8 L8 14 M14 12 L12 14" stroke="#8a8a8a" stroke-width="1"/>
<path d="M14 5 L5 14 M14 9 L9 14" stroke="#fff" stroke-width=".8"/>
</svg></body></html>
